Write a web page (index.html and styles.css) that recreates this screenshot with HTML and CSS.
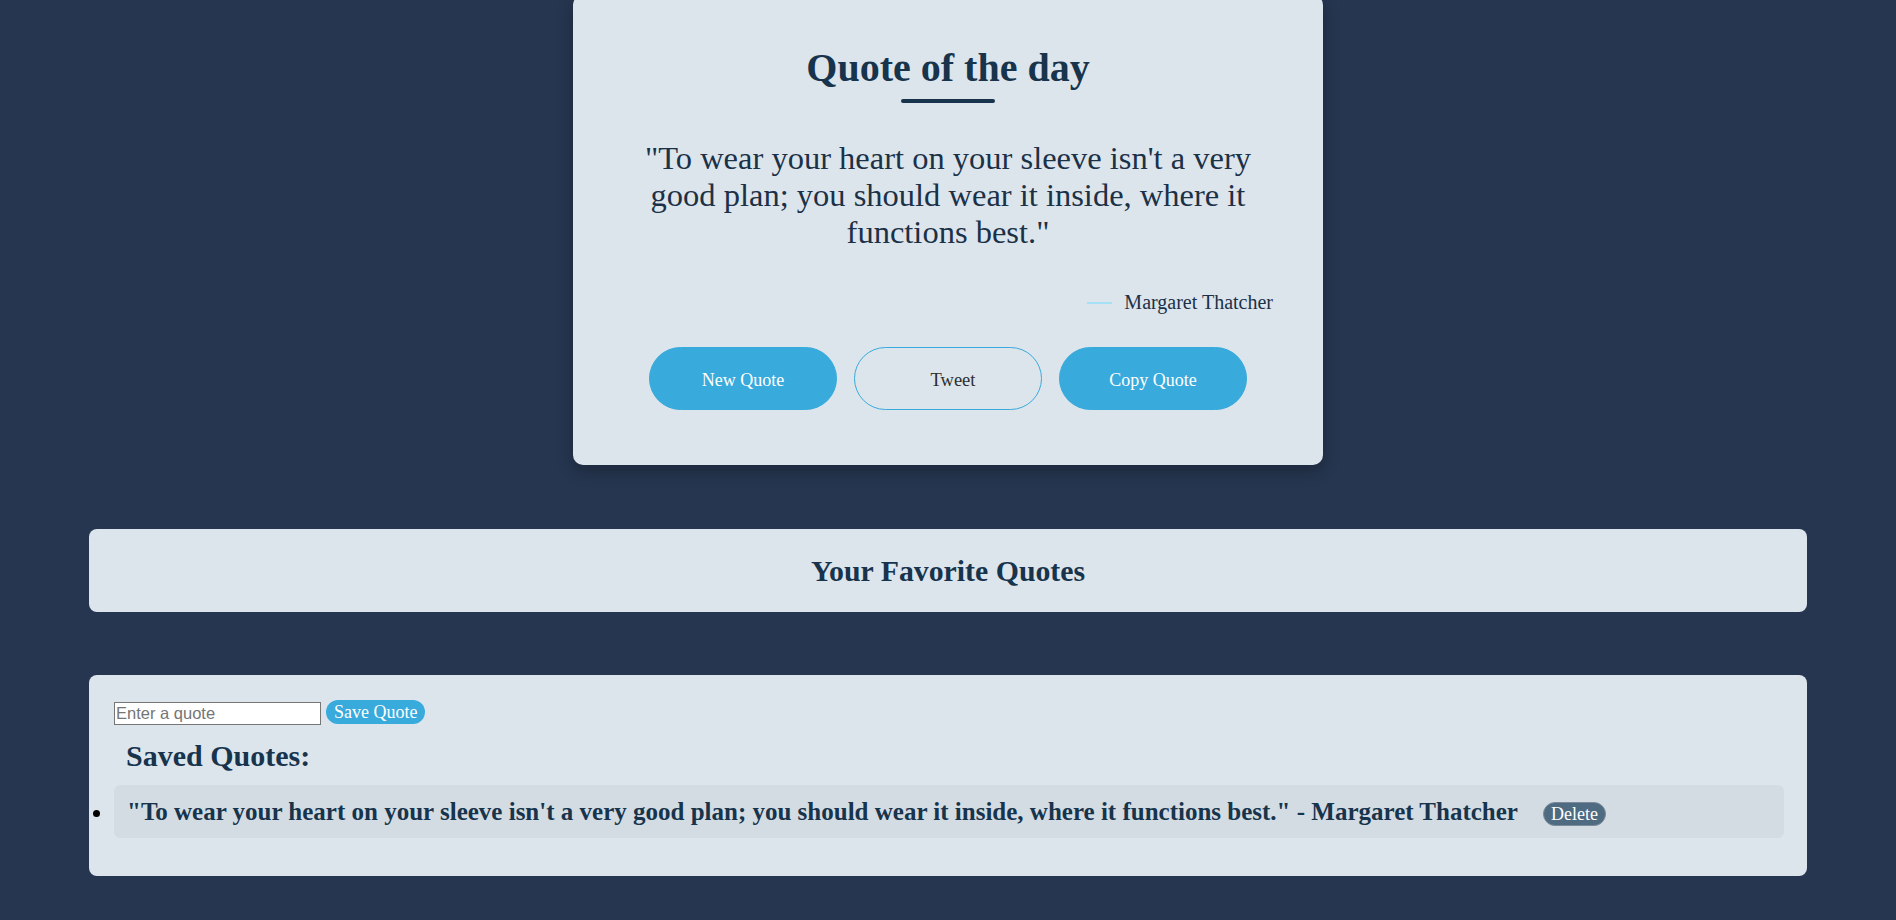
FILE: index.html
```html
<!DOCTYPE html>
<html lang="en">
<head>
<meta charset="utf-8">
<title>Quote of the day</title>
<link rel="stylesheet" href="styles.css">
</head>
<body>
<main class="page">
  <section class="card">
    <h1 class="title">Quote of the day</h1>
    <div class="bar"></div>
    <p class="quote">"To wear your heart on your sleeve isn't a very good plan; you should wear it inside, where it functions best."</p>
    <div class="author"><span class="dash"></span><span class="author-name">Margaret Thatcher</span></div>
    <div class="actions">
      <button class="btn btn-fill">New Quote</button>
      <button class="btn btn-outline">Tweet</button>
      <button class="btn btn-fill">Copy Quote</button>
    </div>
  </section>

  <section class="panel fav">
    <h2 class="fav-title">Your Favorite Quotes</h2>
  </section>

  <section class="panel saved">
    <div class="form-row">
      <input class="quote-input" type="text" placeholder="Enter a quote">
      <button class="save-btn">Save Quote</button>
    </div>
    <h2 class="saved-title">Saved Quotes:</h2>
    <ul class="saved-list">
      <li class="saved-item"><span class="saved-text">"To wear your heart on your sleeve isn't a very good plan; you should wear it inside, where it functions best." - Margaret Thatcher</span><button class="delete-btn">Delete</button></li>
    </ul>
  </section>
</main>
</body>
</html>
```

FILE: styles.css
```css
* { box-sizing: border-box; }

html, body {
  margin: 0;
  padding: 0;
}

body {
  background: #263650;
  font-family: "Liberation Serif", "Times New Roman", serif;
  color: #17344c;
  overflow: hidden;
}

.page {
  display: flex;
  flex-direction: column;
}

.card {
  width: 750px;
  margin: -5px auto 0;
  padding: 50px 50px 55px;
  background: #dde5ec;
  border-radius: 10px;
  box-shadow: 0 6px 16px rgba(0, 0, 0, 0.28);
  display: flex;
  flex-direction: column;
}

.title {
  margin: 0;
  font-size: 40px;
  line-height: 46px;
  font-weight: bold;
  text-align: center;
  color: #17344c;
}

.bar {
  width: 94px;
  height: 4px;
  border-radius: 2px;
  background: #17344c;
  margin: 8px auto 0;
}

.quote {
  margin: 37px 0 0;
  font-size: 32.5px;
  line-height: 36.8px;
  text-align: center;
  color: #1b3147;
}

.author {
  margin-top: 41px;
  display: flex;
  justify-content: flex-end;
  align-items: center;
  gap: 12px;
  font-size: 20px;
  line-height: 23px;
  color: #1b3147;
}

.dash {
  width: 25px;
  height: 2px;
  background: #a6e0f5;
}

.actions {
  margin-top: 33px;
  display: flex;
  justify-content: center;
  gap: 17px;
}

.btn {
  width: 188px;
  height: 63px;
  padding: 3px 0 0;
  border-radius: 32px;
  font-family: "Liberation Serif", "Times New Roman", serif;
  font-size: 18px;
  cursor: pointer;
}

.btn-fill {
  background: #38aadc;
  border: 1px solid #38aadc;
  color: #ffffff;
}

.btn-outline {
  padding-left: 10px;
  background: transparent;
  border: 1px solid #38aadc;
  color: #2e2e2e;
  font-size: 18.5px;
}

.panel {
  margin: 0 89px;
  background: #dde5ec;
  border-radius: 8px;
}

.fav {
  margin-top: 64px;
  padding: 24px;
}

.fav-title {
  margin: 0;
  font-size: 29.8px;
  line-height: 35px;
  font-weight: bold;
  text-align: center;
  color: #17344c;
}

.saved {
  margin-top: 63px;
  padding: 25px 23px 38px 25px;
}

.form-row {
  display: flex;
  align-items: flex-start;
  gap: 5px;
}

.quote-input {
  width: 207px;
  height: 23px;
  margin-top: 2px;
  padding: 0 1px;
  border: 1px solid #767676;
  background: #ffffff;
  font-family: "Liberation Sans", Arial, sans-serif;
  font-size: 16.5px;
  color: #222;
}

.quote-input::placeholder {
  color: #757575;
}

.save-btn {
  height: 24px;
  padding: 0 8px;
  border: none;
  border-radius: 12px;
  background: #38aadc;
  color: #ffffff;
  font-family: "Liberation Serif", "Times New Roman", serif;
  font-size: 18px;
  line-height: 24px;
}

.saved-title {
  margin: 14px 0 0;
  padding-left: 12px;
  font-size: 30px;
  line-height: 33px;
  font-weight: bold;
  color: #17344c;
}

.saved-list {
  margin: 13px 0 0;
  padding: 0;
  list-style: disc outside;
}

.saved-item {
  background: #d4dce3;
  border-radius: 6px;
  padding: 11.5px 13px;
  font-size: 25px;
  line-height: 30px;
  font-weight: bold;
  color: #17344c;
}

.saved-item::marker {
  color: #000;
}

.delete-btn {
  margin-left: 25px;
  height: 24px;
  padding: 0 7px;
  border: 1px solid #7b8a98;
  border-radius: 12px;
  background: #4f6b82;
  color: #ffffff;
  font-family: "Liberation Serif", "Times New Roman", serif;
  font-size: 18px;
  line-height: 22px;
  vertical-align: middle;
}
```
